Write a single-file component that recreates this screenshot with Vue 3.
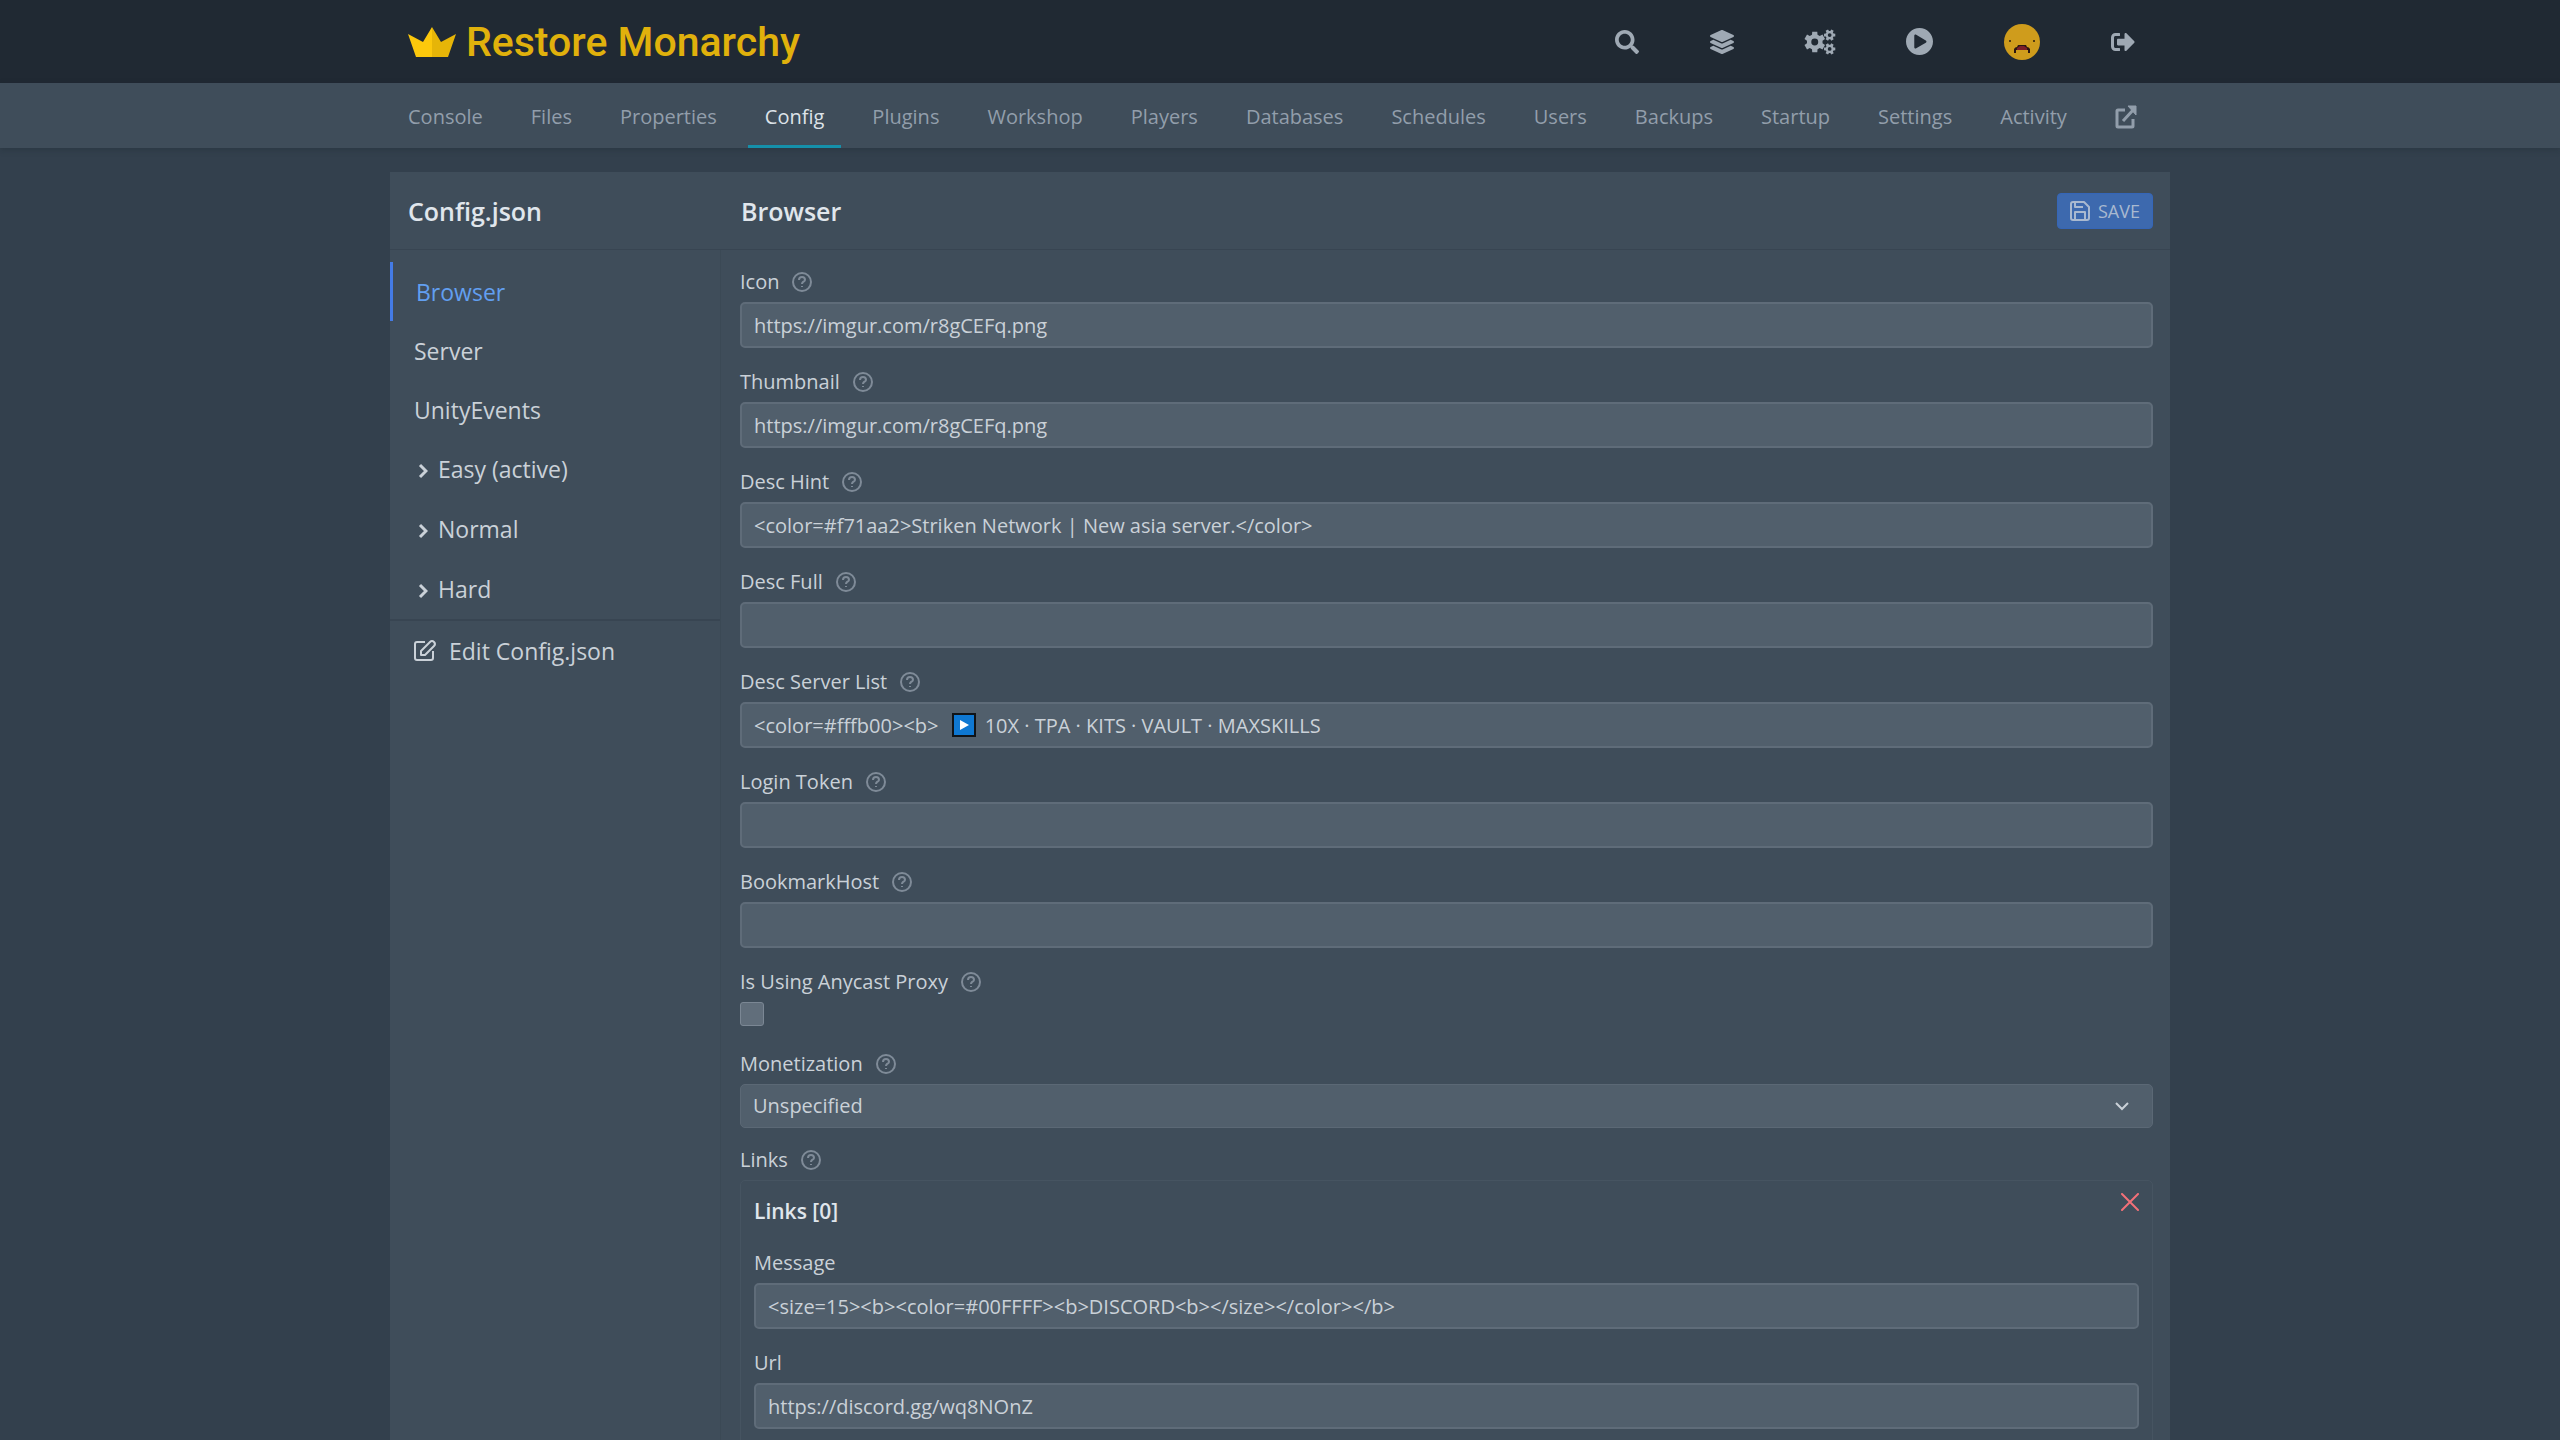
<script setup>
const tabs = ['Console', 'Files', 'Properties', 'Config', 'Plugins', 'Workshop', 'Players', 'Databases', 'Schedules', 'Users', 'Backups', 'Startup', 'Settings', 'Activity']
const sections = ['Browser', 'Server', 'UnityEvents']
const modes = ['Easy (active)', 'Normal', 'Hard']
const fields = [
  { id: 'icon', label: 'Icon', value: 'https://imgur.com/r8gCEFq.png' },
  { id: 'thumbnail', label: 'Thumbnail', value: 'https://imgur.com/r8gCEFq.png' },
  { id: 'desc-hint', label: 'Desc Hint', value: '<color=#f71aa2>Striken Network | New asia server.</color>' },
  { id: 'desc-full', label: 'Desc Full', value: '' },
  { id: 'desc-list', label: 'Desc Server List', value: '<color=#fffb00><b>   ▶   10X · TPA · KITS · VAULT · MAXSKILLS', emoji: true },
  { id: 'login-token', label: 'Login Token', value: '' },
  { id: 'bookmark-host', label: 'BookmarkHost', value: '' },
]
const linkFields = [
  { id: 'link-message', label: 'Message', value: '<size=15><b><color=#00FFFF><b>DISCORD<b></size></color></b>' },
  { id: 'link-url', label: 'Url', value: 'https://discord.gg/wq8NOnZ' },
]

// Outline of a six-toothed gear with a round hole
function gear(cx, cy, outer, inner, hole, turn) {
  const pts = []
  for (let i = 0; i < 6; i++) {
    const base = turn + (i * Math.PI) / 3
    for (const [r, a] of [[inner, -0.36], [outer, -0.24], [outer, 0.24], [inner, 0.36]]) {
      pts.push(`${Math.round(cx + r * Math.cos(base + a))} ${Math.round(cy + r * Math.sin(base + a))}`)
    }
  }
  return `M${pts.join('L')}ZM${cx - hole} ${cy}a${hole} ${hole} 0 1 0 ${hole * 2} 0a${hole} ${hole} 0 1 0 ${-hole * 2} 0Z`
}
const gears = gear(208, 256, 228, 168, 74, Math.PI / 6) + gear(526, 108, 124, 88, 40, 0) + gear(526, 404, 124, 88, 40, 0)
</script>

<template>
  <div class="page">
    <header class="top">
      <div class="wrap top-row">
        <a class="brand" href="#">
          <svg class="crown" viewBox="0 0 48 30" aria-hidden="true">
            <path fill="#fcc80c" d="M0 7l15 8L24 0v30H8z" />
            <path fill="#e6b508" d="M48 7l-15 8L24 0v30h16z" />
          </svg>
          <span>Restore Monarchy</span>
        </a>
        <nav class="tools" aria-label="Account">
          <a href="#" aria-label="Search"><svg class="i24" viewBox="0 0 512 512"><path d="M505 442.7L405.3 343c-4.5-4.5-10.6-7-17-7H372c27.6-35.3 44-79.7 44-128C416 93.1 322.9 0 208 0S0 93.1 0 208s93.1 208 208 208c48.3 0 92.7-16.4 128-44v16.3c0 6.4 2.5 12.5 7 17l99.7 99.7c9.4 9.4 24.6 9.4 33.9 0l28.3-28.3c9.4-9.4 9.4-24.6.1-34zM208 336c-70.7 0-128-57.2-128-128 0-70.7 57.2-128 128-128 70.7 0 128 57.2 128 128 0 70.7-57.2 128-128 128z" /></svg></a>
          <a href="#" aria-label="Servers"><svg class="i24" viewBox="0 0 512 512"><path d="M12.41 148.02l232.94 105.67c6.8 3.09 14.49 3.09 21.29 0l232.94-105.67c16.55-7.51 16.55-32.52 0-40.03L266.65 2.31a25.607 25.607 0 0 0-21.29 0L12.41 107.98c-16.55 7.51-16.55 32.53 0 40.04zm487.18 88.28l-58.09-26.33-161.64 73.27c-7.56 3.43-15.59 5.17-23.86 5.17s-16.29-1.74-23.86-5.17L70.51 209.97l-58.1 26.33c-16.55 7.5-16.55 32.5 0 40l232.94 105.59c6.8 3.08 14.49 3.08 21.29 0L499.59 276.3c16.55-7.5 16.55-32.5 0-40zm0 127.8l-57.87-26.23-161.86 73.37c-7.56 3.43-15.59 5.17-23.86 5.17s-16.29-1.74-23.86-5.17L70.29 337.87 12.41 364.1c-16.55 7.5-16.55 32.5 0 40l232.94 105.59c6.8 3.08 14.49 3.08 21.29 0L499.59 404.1c16.55-7.5 16.55-32.5 0-40z" /></svg></a>
          <a href="#" aria-label="Admin"><svg class="i30" viewBox="0 0 640 512"><path fill-rule="evenodd" :d="gears" /></svg></a>
          <a href="#" aria-label="Billing"><svg class="i27" viewBox="8 8 496 496"><path fill-rule="evenodd" d="M371.7 238l-176-107c-15.8-8.8-35.7 2.5-35.7 21v208c0 18.4 19.8 29.8 35.7 21l176-101c16.4-9.1 16.4-32.8 0-42zM504 256C504 119 393 8 256 8S8 119 8 256s111 248 248 248 248-111 248-248z" /></svg></a>
          <a href="#" aria-label="Profile"><svg class="i36" viewBox="0 0 36 36">
            <circle cx="18" cy="18" r="18" fill="#cf9c1c" />
            <circle cx="6" cy="17" r="1" fill="#2a1c0c" /><circle cx="30" cy="17" r="1" fill="#2a1c0c" />
            <path d="M10 29v-4q1-2 3-2l1-2h8l1 2q2 0 3 2v4h-2v-3H12v3z" fill="#2b1612" />
            <path d="M13 26v-2l3-2h4l3 2v2z" fill="#7c1f28" />
          </svg></a>
          <a href="#" aria-label="Sign out"><svg class="i24" viewBox="0 0 512 512"><path d="M497 273L329 441c-15 15-41 4.500-41-17v-96H152c-13.300 0-24-10.700-24-24v-96c0-13.300 10.700-24 24-24h136V88c0-21.400 25.900-32 41-17l168 168c9.300 9.400 9.300 24.600 0 34zM192 436v-40c0-6.600-5.400-12-12-12H96c-17.700 0-32-14.300-32-32V160c0-17.700 14.300-32 32-32h84c6.600 0 12-5.400 12-12V76c0-6.600-5.400-12-12-12H96c-53 0-96 43-96 96v192c0 53 43 96 96 96h84c6.600 0 12-5.400 12-12z" /></svg></a>
        </nav>
      </div>
    </header>

    <nav class="subnav" aria-label="Server">
      <div class="wrap tabs">
        <a v-for="t in tabs" :key="t" href="#" class="tab" :class="{ on: t === 'Config' }">{{ t }}</a>
        <a href="#" class="tab" aria-label="Open in admin">
          <svg class="ext" viewBox="0 0 22 24" fill="none" stroke="currentColor" stroke-width="3">
            <path d="M10 5H3q-1 0-1 1v15q0 1 1 1h14q1 0 1-1v-7M8 16L19 4" />
            <path d="M13 1h8v9z" fill="currentColor" stroke-width="1" />
          </svg>
        </a>
      </div>
    </nav>

    <main class="panel">
      <div class="panel-head">
        <h1 class="side-title">Config.json</h1>
        <h2 class="main-title">Browser</h2>
        <button class="save" type="button">
          <svg viewBox="0 0 20 20" fill="none" stroke="currentColor" stroke-width="2" stroke-linejoin="round" aria-hidden="true">
            <path d="M1 3q0-2 2-2h11l5 5v11q0 2-2 2H3q-2 0-2-2zM5 1v5h8M5 19v-8h10v8" />
          </svg>
          <span>SAVE</span>
        </button>
      </div>
      <div class="panel-body">
        <nav class="side" aria-label="Sections">
          <a v-for="s in sections" :key="s" href="#" class="item" :class="{ on: s === 'Browser' }">{{ s }}</a>
          <a v-for="m in modes" :key="m" href="#" class="item mode">
            <svg class="chev" viewBox="0 0 10 16" fill="none" stroke="currentColor" stroke-width="3" aria-hidden="true"><path d="M2 2l6 6-6 6" /></svg>
            <span>{{ m }}</span>
          </a>
          <a href="#" class="item edit">
            <svg class="pen" viewBox="0 0 22 22" fill="none" stroke="currentColor" stroke-width="2" stroke-linejoin="round" aria-hidden="true">
              <path d="M11 2H3q-2 0-2 2v14q0 2 2 2h14q2 0 2-2v-7M7 15v-4l9-9q2-2 4 0t0 4l-9 9z" />
            </svg>
            <span>Edit Config.json</span>
          </a>
        </nav>

        <form class="form" @submit.prevent>
          <div v-for="f in fields" :key="f.id" class="field">
            <div class="label-row">
              <label :for="f.id">{{ f.label }}</label>
              <svg class="help" viewBox="0 0 20 20" aria-hidden="true"><circle cx="10" cy="10" r="9" /><path d="M7 8q0-3 3-3t3 3q0 1-2 2-1 1-1 2M10 14v1" /></svg>
            </div>
            <div class="control">
              <input :id="f.id" class="text" type="text" :value="f.value" />
              <svg v-if="f.emoji" class="emoji" viewBox="0 0 24 24" aria-hidden="true">
                <path fill="#101418" d="M0 0h24v24H0z" /><path fill="#0f78d2" d="M2 2h20v20H2z" /><path fill="#fff" d="M8 7l9 5-9 5z" />
              </svg>
            </div>
          </div>

          <div class="field check-field">
            <div class="label-row">
              <label for="anycast">Is Using Anycast Proxy</label>
              <svg class="help" viewBox="0 0 20 20" aria-hidden="true"><circle cx="10" cy="10" r="9" /><path d="M7 8q0-3 3-3t3 3q0 1-2 2-1 1-1 2M10 14v1" /></svg>
            </div>
            <input id="anycast" class="check" type="checkbox" />
          </div>

          <div class="field select-field">
            <div class="label-row">
              <label for="monetization">Monetization</label>
              <svg class="help" viewBox="0 0 20 20" aria-hidden="true"><circle cx="10" cy="10" r="9" /><path d="M7 8q0-3 3-3t3 3q0 1-2 2-1 1-1 2M10 14v1" /></svg>
            </div>
            <div class="control">
              <select id="monetization" class="select"><option>Unspecified</option></select>
              <svg class="caret" viewBox="0 0 14 10" fill="none" stroke="currentColor" stroke-width="2" aria-hidden="true"><path d="M1 2l6 6 6-6" /></svg>
            </div>
          </div>

          <div class="label-row">
            <span>Links</span>
            <svg class="help" viewBox="0 0 20 20" aria-hidden="true"><circle cx="10" cy="10" r="9" /><path d="M7 8q0-3 3-3t3 3q0 1-2 2-1 1-1 2M10 14v1" /></svg>
          </div>
          <section class="card">
            <div class="card-head">
              <h3>Links [0]</h3>
              <button class="remove" type="button" aria-label="Remove link">
                <svg viewBox="0 0 18 18" fill="none" stroke="currentColor" stroke-width="2" stroke-linecap="round"><path d="M1 1l16 16M17 1L1 17" /></svg>
              </button>
            </div>
            <div v-for="f in linkFields" :key="f.id" class="field">
              <div class="label-row"><label :for="f.id">{{ f.label }}</label></div>
              <input :id="f.id" class="text" type="text" :value="f.value" />
            </div>
          </section>
        </form>
      </div>
    </main>
  </div>
</template>

<style>
body {
  margin: 0;
  background: #33404d;
}
</style>

<style scoped>
.page {
  height: 100vh;
  overflow: hidden;
  display: flex;
  flex-direction: column;
  background: #33404d;
  color: #cad1d8;
  font: 20px/28px "Open Sans", "Noto Sans", sans-serif;
}
.page * {
  box-sizing: border-box;
}
a {
  color: inherit;
  text-decoration: none;
}
svg {
  display: block;
  flex: none;
}
h1, h2, h3 {
  margin: 0;
  font-weight: 600;
  color: #e0e6ec;
}
.wrap {
  width: 100%;
  max-width: 1780px;
  margin: 0 auto;
}
.top {
  flex: none;
  background: #202933;
}
.top-row {
  height: 83px;
  padding: 0 35px 0 18px;
  display: flex;
  align-items: center;
  justify-content: space-between;
}
.brand {
  display: flex;
  align-items: center;
  gap: 10px;
  color: #e0b10c;
  font: 500 41px/48px Roboto, sans-serif;
}
.crown {
  width: 48px;
  height: 30px;
}
.tools {
  display: flex;
  align-items: center;
  gap: 71px;
  color: #9fa9b4;
}
.tools svg {
  fill: currentColor;
}
.i24 {
  width: 24px;
  height: 24px;
}
.i30 {
  width: 30px;
  height: 24px;
  overflow: visible;
}
.i27 {
  width: 27px;
  height: 27px;
}
.i36 {
  width: 36px;
  height: 36px;
}
.subnav {
  flex: none;
  background: #3f4d5a;
  box-shadow: 0 2px 6px rgba(20, 30, 40, 0.25);
}
.tabs {
  height: 65px;
  padding: 0 16px 0 1px;
  display: flex;
  justify-content: space-between;
}
.tab {
  padding: 2px 17px 0;
  display: flex;
  align-items: center;
  color: #929eab;
}
.tab.on {
  color: #dde3e9;
  box-shadow: inset 0 -3px #1590aa;
}
.ext {
  width: 22px;
  height: 24px;
}
.panel {
  flex: 1;
  width: 100%;
  max-width: 1780px;
  margin: 24px auto 0;
  display: flex;
  flex-direction: column;
  background: #3f4d5a;
}
.panel-head {
  flex: none;
  height: 78px;
  padding: 0 17px 0 18px;
  display: flex;
  align-items: center;
  border-bottom: 1px solid #384552;
}
.side-title {
  width: 333px;
  font-size: 25px;
}
.main-title {
  flex: 1;
  font-size: 25px;
}
.save {
  height: 36px;
  padding: 0 12px;
  display: flex;
  align-items: center;
  gap: 8px;
  border: 1px solid #3566b8;
  border-radius: 4px;
  background: #3d69ae;
  color: #a9b9d0;
  font: 18px/24px "Open Sans", sans-serif;
}
.save svg {
  width: 20px;
  height: 20px;
}
.panel-body {
  flex: 1;
  display: flex;
}
.side {
  width: 331px;
  padding-top: 12px;
  border-right: 1px solid #3b4955;
  font-size: 23px;
}
.item {
  height: 59px;
  padding-left: 24px;
  display: flex;
  align-items: center;
}
.item.on {
  border-left: 3px solid #447be6;
  padding-left: 23px;
  color: #629ff0;
}
.mode {
  height: 60px;
  gap: 10px;
  padding-left: 28px;
}
.chev {
  width: 10px;
  height: 16px;
  margin-top: 4px;
}
.edit {
  height: 62px;
  gap: 13px;
  border-top: 2px solid #384552;
}
.pen {
  width: 22px;
  height: 22px;
}
.form {
  flex: 1;
  padding: 18px 17px 0 19px;
}
.label-row {
  height: 34px;
  display: flex;
  align-items: flex-start;
  gap: 13px;
}
.help {
  width: 20px;
  height: 20px;
  margin-top: 4px;
  fill: none;
  stroke: #7f8b98;
  stroke-width: 2;
}
.field {
  height: 100px;
}
.control {
  position: relative;
}
.text {
  display: block;
  width: 100%;
  height: 46px;
  padding: 0 12px;
  border: 2px solid #5f6c79;
  border-radius: 5px;
  background: #515f6c;
  color: #cad1d8;
  font: inherit;
}
.emoji {
  position: absolute;
  left: 212px;
  top: 11px;
  width: 24px;
  height: 24px;
}
.check-field {
  height: 82px;
}
.check {
  appearance: none;
  display: block;
  width: 24px;
  height: 24px;
  margin: 0;
  border: 1px solid #7b8794;
  border-radius: 3px;
  background: #616e7b;
}
.select-field {
  height: 96px;
}
.select {
  appearance: none;
  display: block;
  width: 100%;
  height: 44px;
  padding: 0 12px;
  border: 1px solid #5b6875;
  border-radius: 5px;
  background: #515f6c;
  color: #cad1d8;
  font: inherit;
}
.caret {
  position: absolute;
  right: 24px;
  top: 17px;
  width: 14px;
  height: 10px;
}
.card {
  padding: 0 13px;
  border: 1px solid #465461;
  border-radius: 5px;
}
.card-head {
  height: 68px;
  display: flex;
  justify-content: space-between;
}
.card-head h3 {
  padding-top: 16px;
  font-size: 21px;
}
.remove {
  width: 18px;
  height: 42px;
  padding: 0;
  border: 0;
  background: none;
  color: #f37078;
}
.remove svg {
  width: 18px;
  height: 18px;
}
</style>
